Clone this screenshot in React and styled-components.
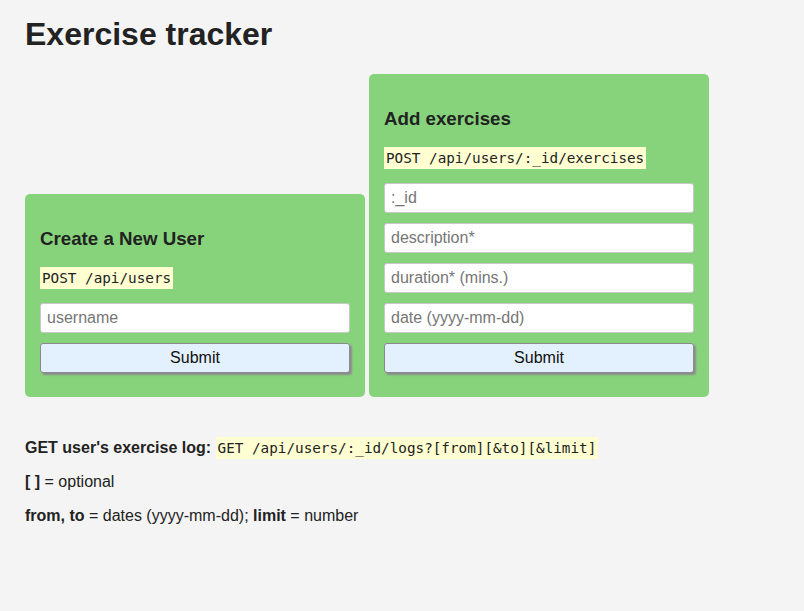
import styled, { createGlobalStyle } from "styled-components";

const GlobalStyle = createGlobalStyle`
  * { box-sizing: border-box; }
  body {
    margin: 0;
    background: #f4f4f4;
    color: #222;
    font-family: "Liberation Sans", Arial, sans-serif;
  }
`;

const Page = styled.div`
  padding: 16px 25px;
`;

const Title = styled.h1`
  margin: 0;
  font-size: 32px;
  line-height: 36px;
  font-weight: bold;
`;

const Forms = styled.div`
  display: flex;
  align-items: flex-end;
  gap: 4px;
  margin-top: 22px;
`;

const Card = styled.form`
  width: 340px;
  display: flex;
  flex-direction: column;
  padding: 15px 15px 24px;
  background: #87d37c;
  border-radius: 5px;
`;

const CardTitle = styled.h3`
  margin: 19px 0 0;
  font-size: 18.72px;
  line-height: 21.5px;
`;

const Endpoint = styled.div`
  margin: 17px 0 14px;
`;

const Code = styled.code`
  display: inline-block;
  padding: 3px 2px;
  line-height: 16px;
  font-family: "DejaVu Sans Mono", "Liberation Mono", monospace;
  font-size: 14.3px;
  background: rgb(255, 255, 210);
  color: #222;
`;

const Fields = styled.div`
  display: flex;
  flex-direction: column;
  gap: 10px;
`;

const Input = styled.input`
  height: 30px;
  width: 100%;
  padding: 0 6px;
  border: 1px solid #c8c8c8;
  border-radius: 3px;
  background: #fff;
  font-family: "Liberation Sans", Arial, sans-serif;
  font-size: 16px;
  color: #222;
  &::placeholder { color: #767676; }
`;

const Button = styled.button`
  height: 30px;
  width: 100%;
  border: 1px solid #8a8a8a;
  border-radius: 3px;
  background: #e3f0fd;
  box-shadow: 2px 2px 2px #8c8c8c;
  font-family: "Liberation Sans", Arial, sans-serif;
  font-size: 16px;
  color: #111;
`;

const Info = styled.div`
  margin-top: 42px;
`;

const Line = styled.p`
  margin: 0 0 16px;
  font-size: 16px;
  line-height: 18.3px;
`;

const InlineCode = styled(Code)`
  display: inline;
  padding: 3px 2px;
`;

function App() {
  return (
    <Page>
      <GlobalStyle />
      <Title>Exercise tracker</Title>
      <Forms>
        <Card onSubmit={(e) => e.preventDefault()}>
          <CardTitle>Create a New User</CardTitle>
          <Endpoint><Code>POST /api/users</Code></Endpoint>
          <Fields>
            <Input placeholder="username" />
            <Button type="submit">Submit</Button>
          </Fields>
        </Card>
        <Card onSubmit={(e) => e.preventDefault()}>
          <CardTitle>Add exercises</CardTitle>
          <Endpoint><Code>POST /api/users/:_id/exercises</Code></Endpoint>
          <Fields>
            <Input placeholder=":_id" />
            <Input placeholder="description*" />
            <Input placeholder="duration* (mins.)" />
            <Input placeholder="date (yyyy-mm-dd)" />
            <Button type="submit">Submit</Button>
          </Fields>
        </Card>
      </Forms>
      <Info>
        <Line>
          <b>GET user's exercise log: </b>
          <InlineCode>GET /api/users/:_id/logs?[from][&amp;to][&amp;limit]</InlineCode>
        </Line>
        <Line><b>[ ]</b> = optional</Line>
        <Line><b>from, to</b> = dates (yyyy-mm-dd); <b>limit</b> = number</Line>
      </Info>
    </Page>
  );
}

export default App;
